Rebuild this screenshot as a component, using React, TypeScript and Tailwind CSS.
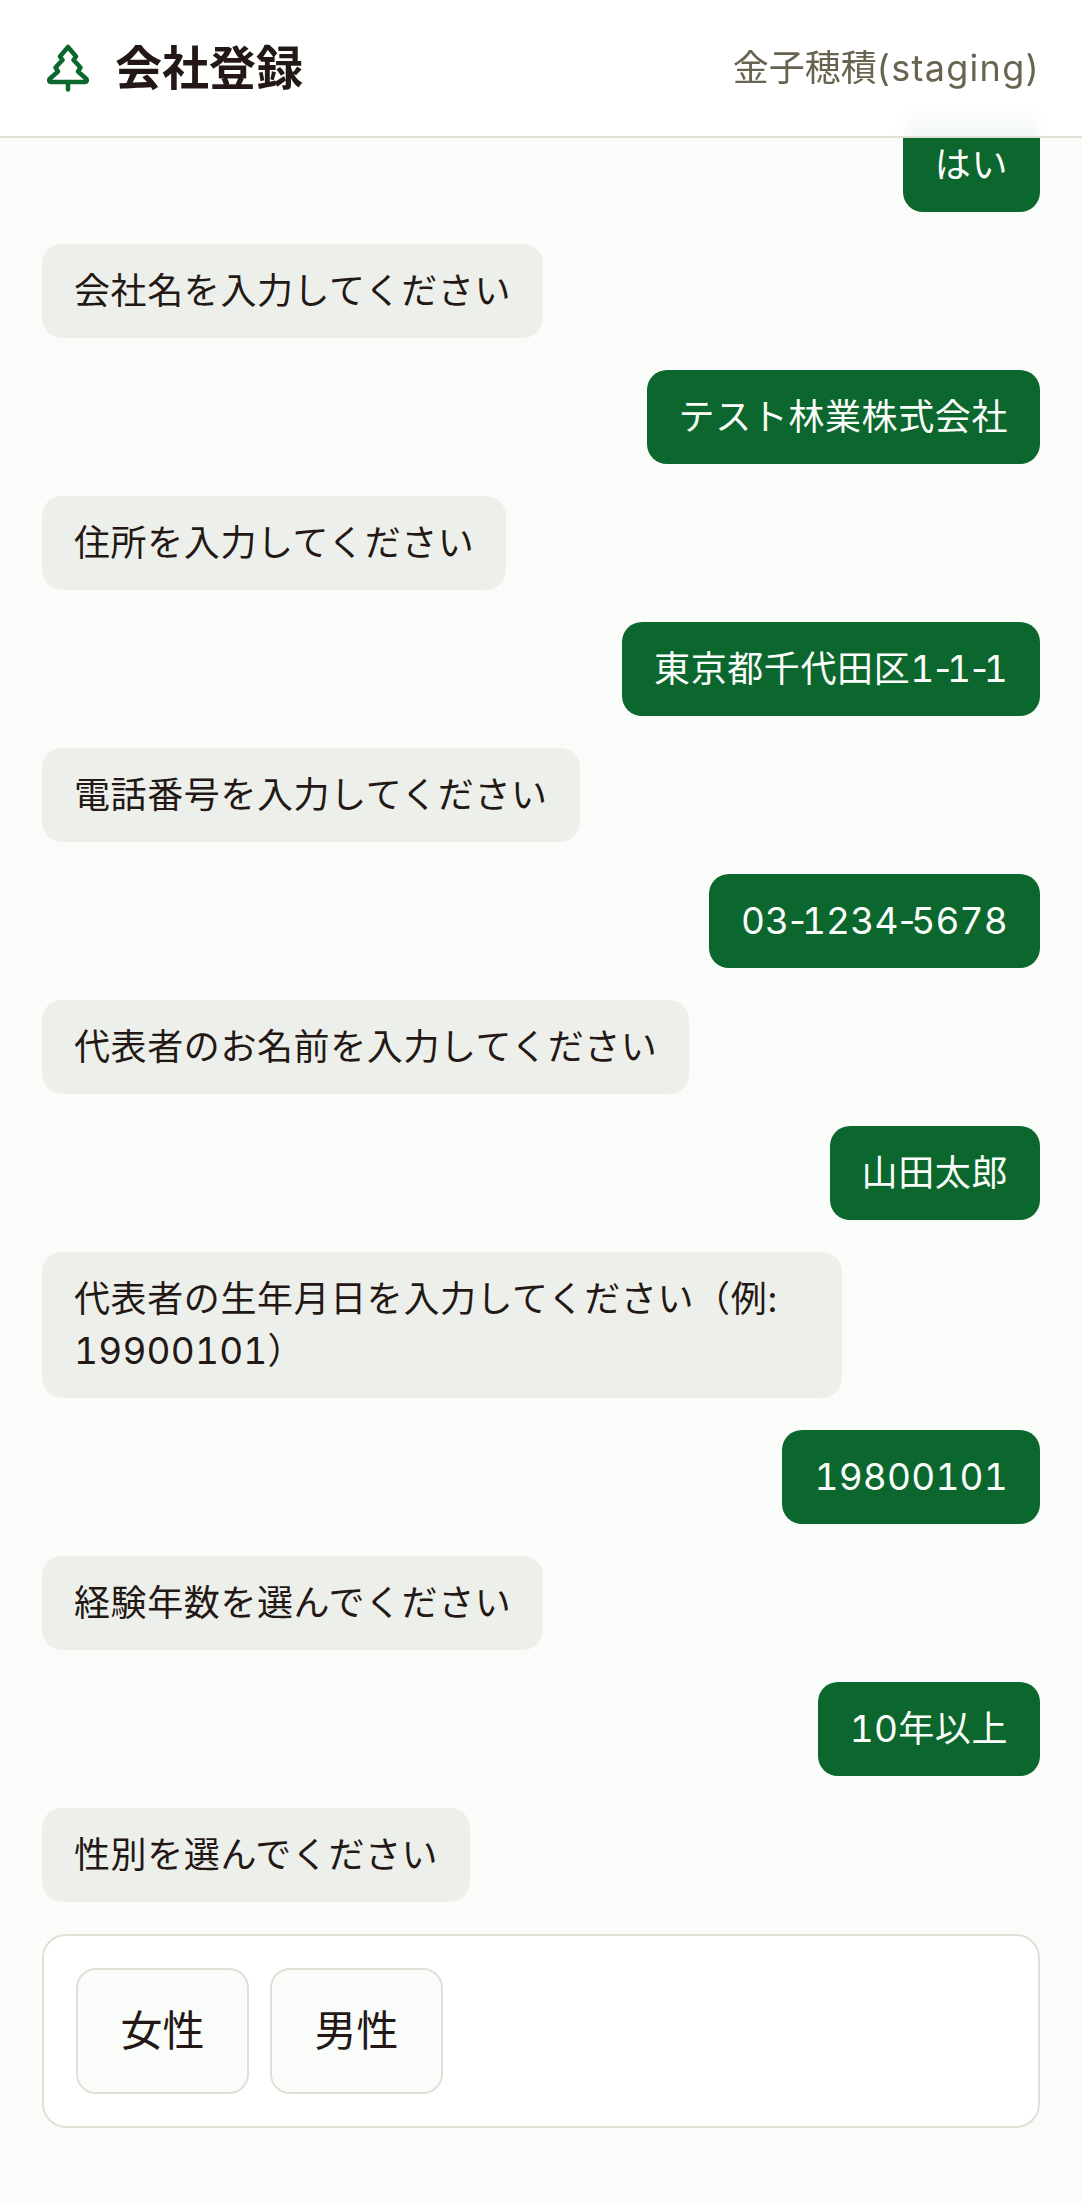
const messages: { from: "bot" | "me"; text: string }[] = [
  { from: "me", text: "はい" },
  { from: "bot", text: "会社名を入力してください" },
  { from: "me", text: "テスト林業株式会社" },
  { from: "bot", text: "住所を入力してください" },
  { from: "me", text: "東京都千代田区1-1-1" },
  { from: "bot", text: "電話番号を入力してください" },
  { from: "me", text: "03-1234-5678" },
  { from: "bot", text: "代表者のお名前を入力してください" },
  { from: "me", text: "山田太郎" },
  { from: "bot", text: "代表者の生年月日を入力してください（例: 19900101）" },
  { from: "me", text: "19800101" },
  { from: "bot", text: "経験年数を選んでください" },
  { from: "me", text: "10年以上" },
  { from: "bot", text: "性別を選んでください" },
];

function TreeIcon() {
  return (
    <svg width="44" height="48" viewBox="0 0 44 48" fill="none" stroke="#0b672e" strokeWidth="4.500" strokeLinejoin="round" strokeLinecap="round">
      <path d="M22 3 L30 12.500 L27.500 16 L34.500 23.500 L32 27.500 L40.500 35 Q41.500 38 39 38 L5 38 Q2.500 38 3.500 35 L12 27.500 L9.500 23.500 L16.500 16 L14 12.500 Z" />
      <path d="M22 38 V45.500" />
    </svg>
  );
}

// digits run wider than the kana around them, hyphens tighter
function Digits({ text }: { text: string }) {
  return (
    <>
      {text.split(/([0-9]+|-)/).map((part, i) => {
        if (part === "-") return <span key={i} className="tracking-[-4px]">-</span>;
        if (/^[0-9]+$/.test(part)) {
          return <span key={i} className="text-[37px] tracking-[0.2px] tabular-nums">{part}</span>;
        }
        return part;
      })}
    </>
  );
}

function Bubble({ from, text }: { from: "bot" | "me"; text: string }) {
  if (from === "me") {
    return (
      <div className="flex justify-end">
        <div className="rounded-[20px] bg-[#0b672e] px-8 py-[21px] text-[#fbfdfa]">
          <Digits text={text} />
        </div>
      </div>
    );
  }
  return (
    <div className="flex justify-start">
      <div className="max-w-[800px] rounded-[20px] bg-[#edf0ea] px-8 py-[21px] text-[#231815]">
        <Digits text={text} />
      </div>
    </div>
  );
}

export default function App() {
  return (
    <div className="relative flex h-[2202px] flex-col justify-end overflow-hidden bg-[#fafcf9] font-['Inter','Noto_Sans_CJK_JP',sans-serif] text-[36px] leading-[52px] tracking-[0.6px]">
      <header className="absolute inset-x-0 top-0 z-10 flex h-[138px] items-center justify-between border-b-2 border-[#e0e0d6] bg-white/95 px-[42px] backdrop-blur-md">
        <div className="flex items-center gap-[25px] pl-[4px]">
          <TreeIcon />
          <h1 className="text-[47px] font-bold tracking-normal text-[#231815]">会社登録</h1>
        </div>
        <span className="text-[36px] tracking-normal text-[#68644f]">
          金子穂積<span className="tracking-[1.3px]">(staging)</span>
        </span>
      </header>

      <main className="flex flex-col gap-[32px] px-[42px] pb-[74px]">
        <div className="h-[94px] w-[440px] rounded-[20px] bg-[#edf0ea]" />
        {messages.map((m, i) => (
          <Bubble key={i} from={m.from} text={m.text} />
        ))}
        <div className="flex gap-[21px] rounded-[24px] border-2 border-[#e0e0d6] bg-white px-8 py-8">
          <button className="h-[126px] w-[173px] rounded-[20px] border-2 border-[#e0e0d6] bg-[#fafcf9] text-[42px] tracking-normal text-[#231815]">女性</button>
          <button className="h-[126px] w-[173px] rounded-[20px] border-2 border-[#e0e0d6] bg-[#fafcf9] text-[42px] tracking-normal text-[#231815]">男性</button>
        </div>
      </main>
    </div>
  );
}
